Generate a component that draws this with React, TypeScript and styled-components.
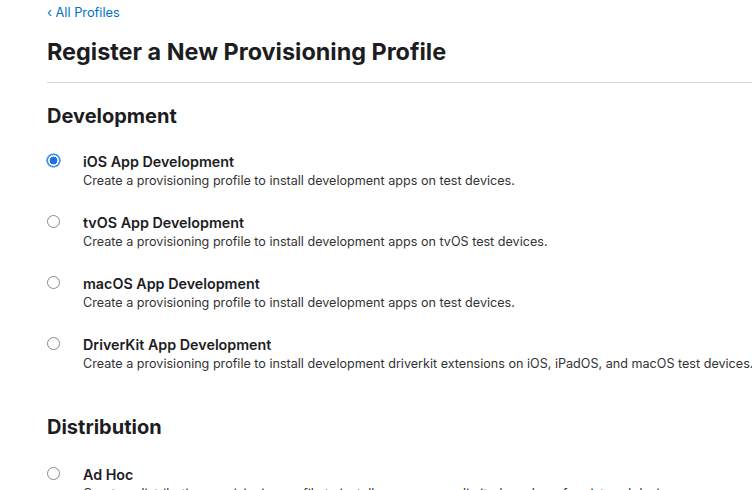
import React from "react";
import styled, { createGlobalStyle } from "styled-components";

const Global = createGlobalStyle`
  html, body { margin: 0; padding: 0; background: #fff; overflow: hidden; }
  body { font-family: Inter, "Noto Sans", sans-serif; color: #1d1d1f; -webkit-font-smoothing: antialiased; }
`;

const Page = styled.div`
  padding: 1px 0 0 47px;
  width: 800px;
  white-space: nowrap;
`;

const BackLink = styled.a`
  display: inline-flex;
  align-items: center;
  font-size: 12.8px;
  line-height: 18px;
  color: #0070c9;
  text-decoration: none;
`;

const Title = styled.h1`
  margin: 16px 0 0;
  font-size: 23.4px;
  line-height: 28px;
  font-weight: 700;
`;

const Divider = styled.hr`
  margin: 16px 0 0;
  border: 0;
  border-top: 1px solid #d6d6d6;
`;

const SectionTitle = styled.h2<{ $gap?: number }>`
  margin: ${(p) => p.$gap ?? 20}px 0 0;
  font-size: 20px;
  line-height: 26px;
  font-weight: 700;
`;

const Options = styled.div<{ $top?: number }>`
  display: flex;
  flex-direction: column;
  gap: 22px;
  margin-top: ${(p) => p.$top ?? 22.5}px;
`;

const Option = styled.label`
  display: grid;
  grid-template-columns: 36px auto;
  align-items: start;
`;

const Radio = styled.span<{ $checked?: boolean }>`
  box-sizing: border-box;
  width: 13px;
  height: 13px;
  margin-top: 2px;
  border-radius: 50%;
  border: 1px solid ${(p) => (p.$checked ? "#1a73e8" : "#8a8a8a")};
  background: ${(p) =>
    p.$checked
      ? "radial-gradient(circle, #1a73e8 0 3.6px, #fff 4.2px)"
      : "#fff"};
  box-shadow: ${(p) => (p.$checked ? "0 0 0 0.6px #1a73e8" : "none")};
`;

const OptionText = styled.div`
  display: flex;
  flex-direction: column;
`;

const OptionLabel = styled.span`
  font-size: 14.3px;
  line-height: 19px;
  font-weight: 600;
  color: #1d1d1f;
`;

const OptionDesc = styled.span`
  font-size: 12.6px;
  line-height: 20px;
  color: #333;
`;

const dev = [
  ["iOS App Development", "Create a provisioning profile to install development apps on test devices."],
  ["tvOS App Development", "Create a provisioning profile to install development apps on tvOS test devices."],
  ["macOS App Development", "Create a provisioning profile to install development apps on test devices."],
  ["DriverKit App Development", "Create a provisioning profile to install development driverkit extensions on iOS, iPadOS, and macOS test devices."],
];

const dist = [
  ["Ad Hoc", "Create a distribution provisioning profile to install your app on a limited number of registered devices."],
];

export default function App() {
  return (
    <>
      <Global />
      <Page>
        <BackLink href="#">‹ All Profiles</BackLink>
        <Title>Register a New Provisioning Profile</Title>
        <Divider />
        <SectionTitle>Development</SectionTitle>
        <Options>
          {dev.map(([t, d], i) => (
            <Option key={t}>
              <Radio $checked={i === 0} />
              <OptionText>
                <OptionLabel>{t}</OptionLabel>
                <OptionDesc>{d}</OptionDesc>
              </OptionText>
            </Option>
          ))}
        </Options>
        <SectionTitle $gap={40}>Distribution</SectionTitle>
        <Options $top={25}>
          {dist.map(([t, d]) => (
            <Option key={t}>
              <Radio />
              <OptionText>
                <OptionLabel>{t}</OptionLabel>
                <OptionDesc>{d}</OptionDesc>
              </OptionText>
            </Option>
          ))}
        </Options>
      </Page>
    </>
  );
}
